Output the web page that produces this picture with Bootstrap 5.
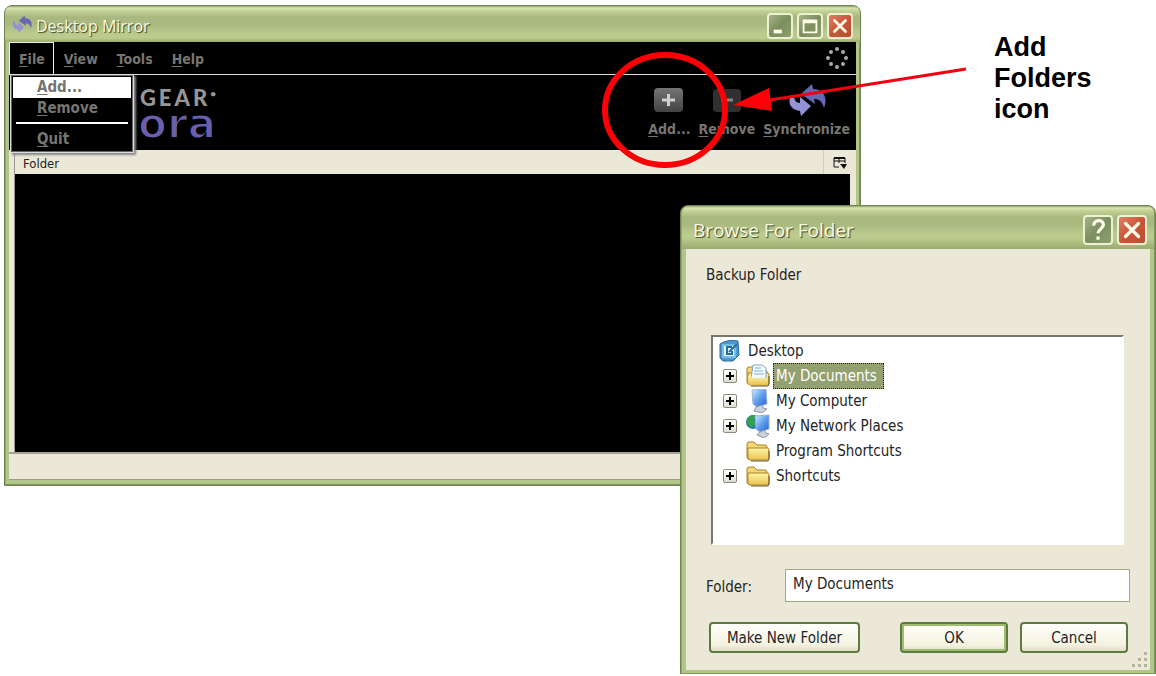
<!DOCTYPE html>
<html lang="en">
<head>
<meta charset="utf-8">
<meta name="viewport" content="width=device-width, initial-scale=1">
<title>Desktop Mirror</title>
<link href="https://cdn.jsdelivr.net/npm/bootstrap@5.3.0/dist/css/bootstrap.min.css" rel="stylesheet">
<style>
:root { --cream:#ebe8d7; --edge:#6f8450; --ui:"DejaVu Sans Condensed","DejaVu Sans",sans-serif; }
body { background:#fff; color:#222; font:13px/20px var(--ui); }
.desk { min-width:960px; min-height:674px; overflow:hidden; }
/* window frames */
.win { border:1px solid var(--edge); border-radius:8px 8px 0 0; background:#b3c68a; box-shadow:inset 1px 0 #8fa86a, inset -1px 0 #7d965a, inset 0 -1px #7d965a; }
.win-main { left:4px; right:295px; top:5px; padding:0 4px 5px; }
.win-browse { right:0; top:205px; width:476px; padding:0 5px 4px; z-index:3; }
.titlebar { margin:0 -4px; padding:0 7px; border-radius:7px 7px 0 0; background:linear-gradient(#8ca164 0,#d9e5b0 2px,#c3d196 5px,#a8b87e 11px,#a9b97f 18px,#bccb8d 28px,#bccb8d 32px,#9aab70 100%); }
.titlebar h1 { margin:0; font:500 16px/24px "Open Sans","Noto Sans",sans-serif; color:#fbf8e2; text-shadow:1px 1px 1px #4e5c38, 1px 1px 0 #76845a; }
.win-browse .titlebar h1 { font-size:19px; }
.win-main .titlebar { height:36px; }
.win-browse .titlebar { height:43px; }
.cap { width:26px; height:26px; padding:0; border:2px solid #eef0d3; border-radius:4px; background:linear-gradient(135deg,#a5b387,#7b8e5d 50%,#90a16e); display:flex; }
.cap svg { width:100%; height:100%; }
.cap-x { background:linear-gradient(135deg,#dd8069,#cb5537 50%,#b94f33); }
.win-browse .cap { width:30px; height:30px; }
/* menu */
.menubar { height:33px; background:#000; border-bottom:1px solid #ddd; font-size:14px; }
.menubar a, .tool { color:#777571; font-weight:700; text-decoration:none; }
.tops > a { display:block; height:32px; padding:6px 8px 0 9px; border:1px solid transparent; border-bottom:0; }
.tops > a.opened { border-color:#eee; }
.drop { left:1px; top:32px; width:124px; z-index:2; border:1px solid #ddd; outline:1px solid #666; outline-offset:-2px; padding:2px; background:#000; box-shadow:2px 2px 2px #888; font-size:15px; }
.drop a { display:block; padding:0 24px; line-height:21px; }
.drop a.hot { background:#fff; }
.drop hr { margin:3px 3px 5px; border-top:2px solid #fff; opacity:1; }
u { text-underline-offset:2px; }
/* brand and toolbar */
.toolbar { height:75px; background:#000; }
.brand { width:207px; text-align:right; padding-top:11px; }
.brand-top { color:#969696; font:900 22px/24px Lato,sans-serif; letter-spacing:3px; }
.brand-top small { font-size:10px; vertical-align:top; line-height:14px; letter-spacing:0; }
.brand-bottom { color:#6a5fac; font:700 42px/28px "DejaVu Sans",sans-serif; -webkit-text-stroke:2px #000; }
.tools { gap:8px; padding:8px 6px 0 0; }
.tool { border:0; background:none; padding:0; font-size:14px; display:flex; flex-direction:column; align-items:center; }
/* folder list */
.listing { padding:0 6px 0 5px; background:var(--cream); }
.listing table { width:100%; margin:0; border-left:1px solid #999; }
.listing th { height:24px; padding:4px 8px 0; line-height:20px; font-weight:400; }
.listing th + th { width:27px; padding:2px 0 0 9px; border-left:1px solid #d3cfbd; }
.listing td { height:278px; background:#000; }
.status { height:28px; background:var(--cream); border-top:2px solid #a3a392; border-bottom:1px solid #999d83; }
/* browse dialog */
.pane { background:var(--cream); padding:0 20px; height:421px; color:#252525; font-size:15px; }
.tree { height:210px; margin:50px 6px 0 5px; background:#fff; border:2px solid; border-color:#77776c #fff #fff #77776c; padding:1px 5px; }
.tree li { height:25px; display:flex; align-items:center; }
.tree li svg { width:24px; height:24px; flex:none; }
.twist { width:14px; height:14px; padding:0; margin:0 9px 0 5px; border:1px solid #8a8a7a; border-radius:2px; background:linear-gradient(#fff,#deded2); display:flex; }
.tree .twist svg { width:12px; height:12px; }
.gapcell { width:28px; }
.node { margin-left:3px; padding:0 6px 0 2px; line-height:24px; border:1px solid transparent; }
.node.picked { background:#93a070; color:#fff; border:1px dotted #222; }
.path-label { width:79px; }
.pathbox { height:33px; border:1px solid #a0aa84; border-radius:0; background:#fff; padding:0 7px 3px; font-size:15px; color:#252525; min-width:0; }
.actions { padding:0 2px 0 3px; }
.push { height:31px; width:108px; border:2px solid #5e7b3f; border-radius:4px; background:linear-gradient(#fffffa,#f4f3e2 75%,#e2dfc8); color:#252525; font-size:15px; line-height:20px; padding:0; }
.push-wide { width:151px; }
.push-ok { box-shadow:inset 0 0 0 2px #a1bd71; }
.grip { right:2px; bottom:3px; width:16px; height:16px; }
/* callout */
.marks { right:184px; top:48px; width:372px; height:124px; z-index:2; pointer-events:none; }
.callout { right:36px; top:32px; width:126px; color:#000; font:700 27px/31px "Liberation Sans",Arial,sans-serif; }
</style>
</head>
<body>
<svg class="position-absolute" width="0" height="0" aria-hidden="true">
  <defs>
    <linearGradient id="gold" x2="0" y2="1"><stop stop-color="#fff5a8"/><stop offset="1" stop-color="#e8c44c"/></linearGradient>
    <linearGradient id="screen" x2="1" y2="1"><stop stop-color="#d4efff"/><stop offset=".5" stop-color="#5f9eee"/><stop offset="1" stop-color="#2b5fd0"/></linearGradient>
    <linearGradient id="grey" x2="0" y2="1"><stop stop-color="#747474"/><stop offset="1" stop-color="#434343"/></linearGradient>
  </defs>
  <symbol id="sync" viewBox="0 0 38 34">
    <path fill="#9293d4" d="M3 12C-1 20 3 27 12 28l1 5 10-10-11-9v6C8 20 6 17 6 12z"/>
    <path fill="#6668b3" d="M13 11 24 1l1 5c11 0 15 9 11 19-2-7-5-9-10-9l1 5z"/>
  </symbol>
  <symbol id="cross" viewBox="0 0 24 24"><path d="M6 6l12 12M18 6L6 18" stroke="#fffbe8" stroke-width="3" stroke-linecap="round"/></symbol>
  <symbol id="plus" viewBox="0 0 12 12"><path d="M2 6h8M6 2v8" stroke="#000" stroke-width="2"/></symbol>
  <symbol id="folder" viewBox="0 0 24 24">
    <path d="M1 5q0-2 2-2h5l3 3h8q2 0 2 2v12H3q-2 0-2-2z" fill="#f3d675" stroke="#a98128"/>
    <path d="M2 9h20q1 0 1 2v8q0 2-2 2H4q-2 0-2-2z" fill="url(#gold)" stroke="#a98128"/>
    <path d="M23 12v8q0 2-2 2H5" fill="none" stroke="#6b5425"/>
  </symbol>
</svg>

<main class="desk position-relative">
  <section class="win win-main position-absolute" aria-label="Desktop Mirror">
    <header class="titlebar d-flex align-items-center">
      <svg width="20" height="18"><use href="#sync"/></svg>
      <h1 class="ms-1 me-auto pt-1">Desktop Mirror</h1>
      <div class="d-flex gap-1 pt-1">
        <button class="cap" aria-label="Minimize"><svg viewBox="0 0 24 24"><path d="M5 16h9v4H5z" fill="#fffbe8"/></svg></button>
        <button class="cap" aria-label="Maximize"><svg viewBox="0 0 24 24"><path d="M5 6h14v13H5zM5 8h14" fill="none" stroke="#fffbe8" stroke-width="2"/></svg></button>
        <button class="cap cap-x" aria-label="Close"><svg><use href="#cross"/></svg></button>
      </div>
    </header>

    <nav class="menubar d-flex justify-content-between position-relative">
      <div class="tops d-flex">
        <a href="#" class="opened"><u>F</u>ile</a>
        <a href="#"><u>V</u>iew</a>
        <a href="#"><u>T</u>ools</a>
        <a href="#"><u>H</u>elp</a>
      </div>
      <svg class="mt-1 me-2" width="22" height="24" viewBox="0 0 22 24" fill="#aaa">
        <circle cx="11" cy="3" r="2"/><circle cx="17" cy="6" r="2"/><circle cx="20" cy="12" r="2"/><circle cx="17" cy="18" r="2"/><circle cx="11" cy="21" r="2"/><circle cx="5" cy="18" r="2"/><circle cx="2" cy="12" r="2"/><circle cx="5" cy="6" r="2"/>
      </svg>
      <div class="drop position-absolute">
        <a href="#" class="hot"><u>A</u>dd...</a>
        <a href="#"><u>R</u>emove</a>
        <hr>
        <a href="#"><u>Q</u>uit</a>
      </div>
    </nav>

    <div class="toolbar d-flex justify-content-between">
      <div class="brand">
        <div class="brand-top">GEAR<small>•</small></div>
        <div class="brand-bottom">ora</div>
      </div>
      <div class="tools d-flex align-items-start">
        <button class="tool"><svg width="36" height="36"><rect x="3" y="5" width="29" height="24" rx="4" fill="url(#grey)"/><path d="M11 17h13M17.500 11v12" stroke="#d0d0d0" stroke-width="3"/></svg><span><u>A</u>dd...</span></button>
        <button class="tool"><svg width="36" height="36"><rect x="4" y="6" width="28" height="23" rx="4" fill="#303030"/><path d="M12 17h12" stroke="#858585" stroke-width="3"/></svg><span><u>R</u>emove</span></button>
        <button class="tool"><svg width="38" height="36"><use href="#sync" width="38" height="34"/></svg><span><u>S</u>ynchronize</span></button>
      </div>
    </div>

    <div class="listing">
      <table>
        <thead><tr><th scope="col">Folder</th><th scope="col" aria-label="Columns"><svg class="d-block" width="14" height="13" fill="none" stroke="#111"><path d="M1 1h11v5M6 1v5M1 1v9h5M1 4h11"/><path d="M1 1h11" stroke-width="2"/><path d="M7 7h7l-3 5z" fill="#111" stroke="none"/></svg></th></tr></thead>
        <tbody><tr><td colspan="2"></td></tr></tbody>
      </table>
    </div>
    <footer class="status"></footer>
  </section>

  <svg class="marks position-absolute" viewBox="0 0 372 124" aria-hidden="true">
    <ellipse cx="65" cy="62" rx="60" ry="55" fill="none" stroke="#fb0007" stroke-width="6"/>
    <path d="M366 21 170 52" stroke="#f00010" stroke-width="3"/>
    <path d="M133 57 169 40l3 23z" fill="#fb0007"/>
  </svg>
  <div class="callout position-absolute">Add<br>Folders<br>icon</div>

  <section class="win win-browse position-absolute" role="dialog" aria-labelledby="browse-title">
    <header class="titlebar d-flex align-items-center">
      <h1 id="browse-title" class="ms-1 me-auto pt-1">Browse For Folder</h1>
      <div class="d-flex gap-1 pt-1">
        <button class="cap" aria-label="Help"><svg viewBox="0 0 24 24"><path d="M8 8c0-6 9-6 9-1 0 4-5 4-5 8M12 18v3" fill="none" stroke="#fffbe8" stroke-width="3"/></svg></button>
        <button class="cap cap-x" aria-label="Close"><svg><use href="#cross"/></svg></button>
      </div>
    </header>
    <div class="pane position-relative">
      <div class="pt-3">Backup Folder</div>
      <ul class="tree list-unstyled">
        <li><svg viewBox="0 0 24 24"><path d="M2 5q7-5 18-3l1 14-6 6H5l-3-3z" fill="#4b9bd1" stroke="#2a6a9b"/><path d="M5 6h12v12H5z" fill="#e7f7ff" stroke="#79bce4" stroke-width="2"/><path d="M14 8H9v7h5v-3M11 13l8-8" fill="none" stroke="#276da5" stroke-width="2"/></svg><span class="node">Desktop</span></li>
        <li><button class="twist" aria-label="Expand My Documents"><svg><use href="#plus"/></svg></button><svg viewBox="0 0 24 24"><use href="#folder"/><path d="M7 1h9l4 3v11H5z" fill="#f4faff" stroke="#7fa6c9"/><path d="M9 4h6M8 7h9M8 10h10" stroke="#7fb0dc"/><path d="M2 12h3l2 2h15v6q0 1-1 1H4q-2 0-2-2z" fill="url(#gold)" opacity=".85"/></svg><span class="node picked">My Documents</span></li>
        <li><button class="twist" aria-label="Expand My Computer"><svg><use href="#plus"/></svg></button><svg viewBox="0 0 24 24"><path d="M6 1l14-1 1 15-10 3-4-3z" fill="url(#screen)" stroke="#98b5d8"/><path d="M10 18l6-2 1 3 4 1-5 4-8-2z" fill="#cbd2da" stroke="#8a97a9"/></svg><span class="node">My Computer</span></li>
        <li><button class="twist" aria-label="Expand My Network Places"><svg><use href="#plus"/></svg></button><svg viewBox="0 0 24 24"><circle cx="7" cy="8" r="7" fill="#2675c9"/><path d="M1 5q5-6 9-3l-3 4 3 3-4 5Q0 11 1 5z" fill="#35a343"/><path d="M9 2l14-1v14l-9 3-4-3z" fill="url(#screen)" stroke="#98b5d8"/><path d="M14 18l4-2 2 3 3 1-5 4-7-3z" fill="#cbd2da" stroke="#8a97a9"/></svg><span class="node">My Network Places</span></li>
        <li><span class="gapcell"></span><svg><use href="#folder"/></svg><span class="node">Program Shortcuts</span></li>
        <li><button class="twist" aria-label="Expand Shortcuts"><svg><use href="#plus"/></svg></button><svg><use href="#folder"/></svg><span class="node">Shortcuts</span></li>
      </ul>
      <div class="d-flex mt-4">
        <label for="folder-path" class="path-label pt-2">Folder:</label>
        <input id="folder-path" class="pathbox flex-grow-1" value="My Documents">
      </div>
      <div class="actions d-flex gap-2 mt-3 pt-1">
        <button class="push push-wide me-auto">Make New Folder</button>
        <button class="push push-ok me-1">OK</button>
        <button class="push">Cancel</button>
      </div>
      <svg class="grip position-absolute" viewBox="0 0 16 16" fill="#b6b2a0"><path d="M12 1h3v3h-3zM12 7h3v3h-3zM12 13h3v3h-3zM6 7h3v3H6zM6 13h3v3H6zM0 13h3v3H0z"/></svg>
    </div>
  </section>
</main>
<script src="https://cdn.jsdelivr.net/npm/bootstrap@5.3.0/dist/js/bootstrap.bundle.min.js"></script>
</body>
</html>
